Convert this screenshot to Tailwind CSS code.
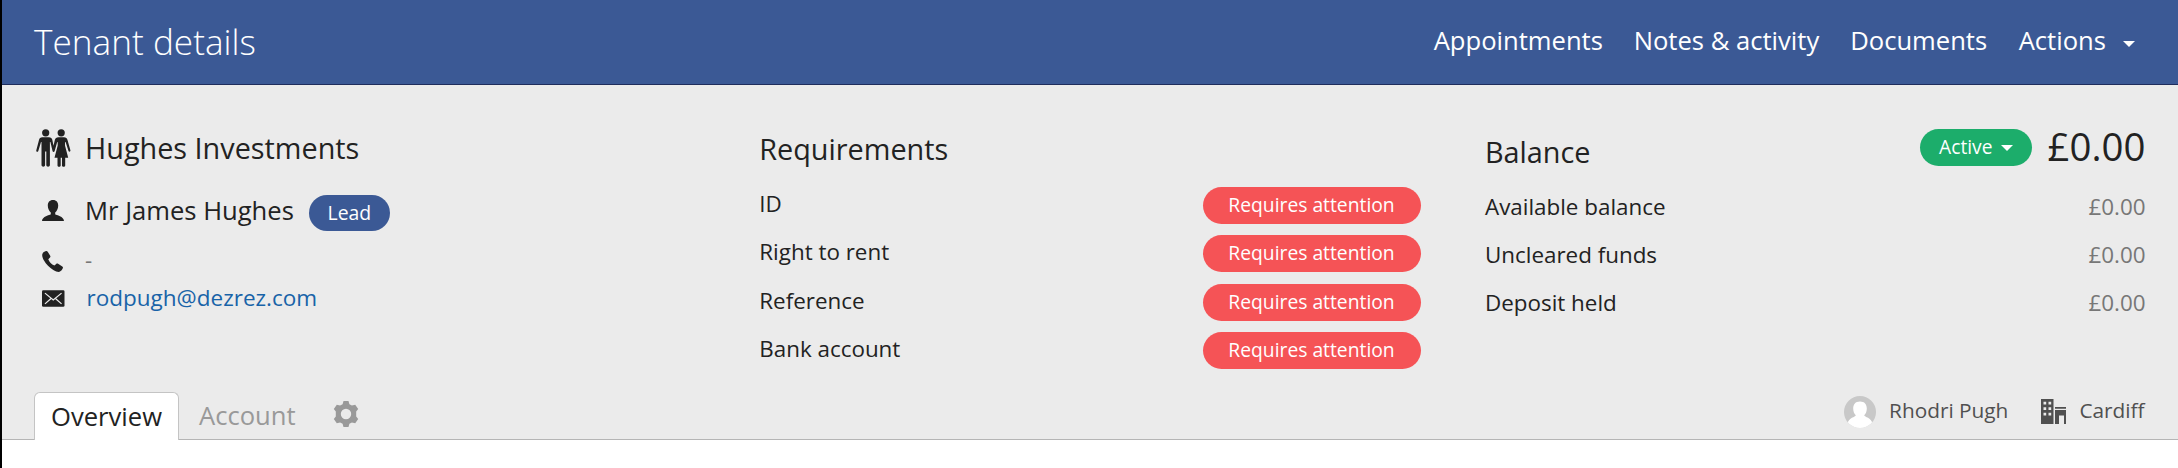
<!DOCTYPE html>
<html lang="en">
<head>
<meta charset="utf-8">
<title>Tenant details</title>
<script src="https://cdn.jsdelivr.net/npm/@tailwindcss/browser@4"></script>
</head>
<body class="bg-white">
<div class="flex h-[468px] w-[2178px] flex-col overflow-hidden border-l-2 border-black bg-white font-['Open_Sans',sans-serif] text-[#222] whitespace-nowrap">

  <header class="flex h-[85px] shrink-0 justify-between border-b border-[#1f2d5c] bg-[#3b5995] pl-8 pr-[43px] text-white">
    <h1 class="text-[35.2px] leading-[82px] font-light">Tenant details</h1>
    <nav class="flex h-[82px] text-[25.6px] leading-[82px]">
      <a class="w-[200px]">Appointments</a>
      <a class="w-[216.5px]">Notes &amp; activity</a>
      <a class="w-[168.5px]">Documents</a>
      <a class="flex items-center">Actions
        <svg class="mt-[5px] ml-[17px] h-[6px] w-[12px]" viewBox="0 0 12 6" fill="currentColor"><path d="M0 0h12L6 6z"/></svg>
      </a>
    </nav>
  </header>

  <main class="flex h-[355px] shrink-0 flex-col border-b border-[#b5b5b5] bg-[#ebebeb]">
    <div class="flex h-[307px] shrink-0">

      <section class="w-[757.3px] pt-[43px] pl-6">
        <div class="flex h-10 items-center">
          <svg class="mr-[14px] ml-[10px] h-[38px] w-[35px]" viewBox="0 0 35 38" fill="#222">
            <circle cx="9.7" cy="3.8" r="3.6"/>
            <circle cx="25.2" cy="3.8" r="3.6"/>
            <path d="M6.3 8.2h6.6c2 0 3 1 3.4 2.600l1.200 6 1.400-6c.5-1.700 1.500-2.600 3.500-2.600h5.600c2 0 3 1 3.500 2.700l2.900 10.300c.4 1.600-1.500 2.100-2 .6L29.600 13l-.6.200v3.300l3.200 12.300h-3v7.600c0 1.900-3.200 1.900-3.200 0v-7.600h-1.300v7.600c0 1.900-3.200 1.900-3.200 0v-7.600h-3l3.200-12.300v-3.300l-.5-.2-2.600 9.200c-.4 1.100-1.700 1.100-2 0L14.400 13l-.5.100v23c0 2.100-3.600 2.100-3.600 0V22.500H9.100v13.600c0 2.100-3.600 2.100-3.600 0v-23L5 13 2.300 21.900c-.5 1.500-2.400 1-2-.6L3 10.900c.4-1.700 1.400-2.700 3.300-2.700z"/>
          </svg>
          <h2 class="text-[28.8px] leading-10">Hughes Investments</h2>
        </div>
        <div class="mt-[22px] flex h-10 items-center">
          <svg class="mr-[21px] ml-[16px] h-[21px] w-[22px]" viewBox="0 0 22 21" fill="#222"><path d="M11 0c3.500 0 5.200 2.400 5.200 5.600 0 3-1.300 5.600-3 6.900v1.700c1 1 8.800 2.100 8.800 6.800H0c0-4.700 7.800-5.800 8.800-6.800v-1.700c-1.700-1.300-3-3.900-3-6.900C5.800 2.400 7.500 0 11 0z"/></svg>
          <span class="pt-[2px] text-[25.6px] leading-10">Mr James Hughes</span>
          <span class="mt-[6px] ml-[15px] h-9 w-[81px] rounded-full bg-[#3b5995] text-center text-[19.4px] leading-9 text-white">Lead</span>
        </div>
        <div class="mt-4 flex h-[30px] items-center text-[22.4px] leading-[26px] text-[#777]">
          <svg class="mr-[22px] ml-[16px] h-[21px] w-[21px]" viewBox="0 0 21 21" fill="#222"><path d="M.4 3C1 1.500 2.500.5 4 .1c.7-.2 1.300.1 1.700.7l2.500 3.900c.4.700.3 1.400-.2 1.900L6.300 8.300c1 2.700 3.200 5 6.100 6.300l1.800-1.700c.5-.5 1.300-.5 1.900-.1l4.200 2.700c.6.4.8 1 .6 1.600-.5 1.500-1.700 3-3.300 3.700-1.300.5-4-.4-6.300-1.800-3.700-2.300-7.300-5.900-9.300-9.500C.6 7.200-.2 4.500.4 3z"/></svg>
          <span class="pb-[2px]">-</span>
        </div>
        <div class="mt-[7px] flex h-[30px] items-center text-[22.4px] leading-[30px]">
          <svg class="mr-[22px] ml-[16px] h-[17px] w-[22.500px]" viewBox="0 0 23 17" fill="none"><rect width="23" height="17" rx="1.300" fill="#222"/><path d="M3 3l8.500 7L20 3M3 14l6-5.300M20 14l-6-5.300" stroke="#ebebeb" stroke-width="1.300"/></svg>
          <a class="text-[22.5px] text-[#1863a8]">rodpugh@dezrez.com</a>
        </div>
      </section>

      <section class="w-[661.700px] pt-[43px] text-[22.4px]">
        <h2 class="h-[59px] text-[28.8px] leading-[41px]">Requirements</h2>
        <div class="flex flex-col gap-[11.600px]">
          <div class="flex h-[36.800px] items-center justify-between"><span class="pb-[3px] leading-8">ID</span><span class="h-full w-[218px] rounded-full bg-[#f55356] pr-px text-center text-[19.3px] leading-[35px] text-white">Requires attention</span></div>
          <div class="flex h-[36.800px] items-center justify-between"><span class="pb-[3px] leading-8">Right to rent</span><span class="h-full w-[218px] rounded-full bg-[#f55356] pr-px text-center text-[19.3px] leading-[35px] text-white">Requires attention</span></div>
          <div class="flex h-[36.800px] items-center justify-between"><span class="pb-[3px] leading-8">Reference</span><span class="h-full w-[218px] rounded-full bg-[#f55356] pr-px text-center text-[19.3px] leading-[35px] text-white">Requires attention</span></div>
          <div class="flex h-[36.800px] items-center justify-between"><span class="pb-[3px] leading-8">Bank account</span><span class="h-full w-[218px] rounded-full bg-[#f55356] pr-px text-center text-[19.3px] leading-[35px] text-white">Requires attention</span></div>
        </div>
      </section>

      <section class="ml-[64px] w-[660.500px] text-[22.4px] leading-[48px]">
        <div class="flex h-[98px] items-start justify-between">
          <h2 class="pt-[47px] text-[28.8px] leading-10">Balance</h2>
          <div class="flex">
            <span class="mt-11 flex h-[37px] w-[112px] rounded-full bg-[#1cad6b] pl-[19.500px] text-[19.2px] leading-[36px] text-white">Active
              <svg class="mt-[16px] ml-[9px] h-[6px] w-[12px]" viewBox="0 0 12 6" fill="currentColor"><path d="M0 0h12L6 6z"/></svg>
            </span>
            <span class="mt-[37px] ml-4 text-[38.4px]">£0.00</span>
          </div>
        </div>
        <div class="flex justify-between"><span>Available balance</span><span class="text-[#777]">£0.00</span></div>
        <div class="flex justify-between"><span>Uncleared funds</span><span class="text-[#777]">£0.00</span></div>
        <div class="flex justify-between"><span>Deposit held</span><span class="text-[#777]">£0.00</span></div>
      </section>
    </div>

    <div class="flex h-12 shrink-0 justify-between pr-[33.500px] pl-8">
      <div class="flex text-[25.6px] leading-[46px]">
        <a class="h-12 w-[145px] rounded-t-[6px] border border-b-0 border-[#c4c4c4] bg-white pt-px text-center">Overview</a>
        <a class="ml-[20px] pt-px text-[#999]">Account</a>
        <svg class="mt-[9px] ml-[37px] h-[26px] w-[26px]" viewBox="0 0 26 26" fill="#999" fill-rule="evenodd"><path d="M10.500 0h5l.9 3.200 2.500 1.400 3.300-.9 3 4.300-2 2.600v4.800l2 2.600-3 4.300-3.300-.9-2.500 1.400-.9 3.200h-5l-.9-3.200-2.500-1.400-3.300.9-3-4.300 2-2.600v-4.800L.8 8l3-4.300 3.300.9 2.500-1.400zM13 7.800a5.200 5.200 0 1 0 0 10.400a5.200 5.200 0 1 0 0-10.400z"/></svg>
      </div>
      <div class="flex text-[20.8px] leading-[36px] text-[#505050]">
        <svg class="mt-1 h-8 w-8" viewBox="0 0 32 32"><defs><clipPath id="avatar"><circle cx="16" cy="16" r="16"/></clipPath></defs><g clip-path="url(#avatar)"><rect width="32" height="32" fill="#c8c8c8"/><path d="M16 5.500c4.600 0 6.800 2.800 6.800 7 0 3-1 5.300-2.600 6.700.5 2.200 7 2 8.300 8.300V32h-25v-4.500c1.300-6.300 7.800-6.100 8.300-8.300-1.600-1.400-2.600-3.700-2.600-6.700 0-4.200 2.200-7 6.800-7z" fill="#fff"/></g></svg>
        <span class="ml-[13px]">Rhodri Pugh</span>
        <svg class="mt-[7px] ml-[33px] h-[25px] w-[25px]" viewBox="0 0 25 25" fill="#505050" fill-rule="evenodd"><path d="M0 0h12.500v25H0zM2.500 2.800h2.700v2.700H2.500zM7.500 2.800h2.700v2.700H7.500zM2.500 8.300h2.700V11H2.500zM7.500 8.300h2.700V11H7.500zM2.500 13.800h2.700v2.700H2.500zM7.500 13.800h2.700v2.700H7.500z"/><path d="M14 8h11v1.700H14zM14 11h11v14h-2v-8.500h-5V25h-4z"/></svg>
        <span class="ml-[13px]">Cardiff</span>
      </div>
    </div>
  </main>
</div>
</body>
</html>
